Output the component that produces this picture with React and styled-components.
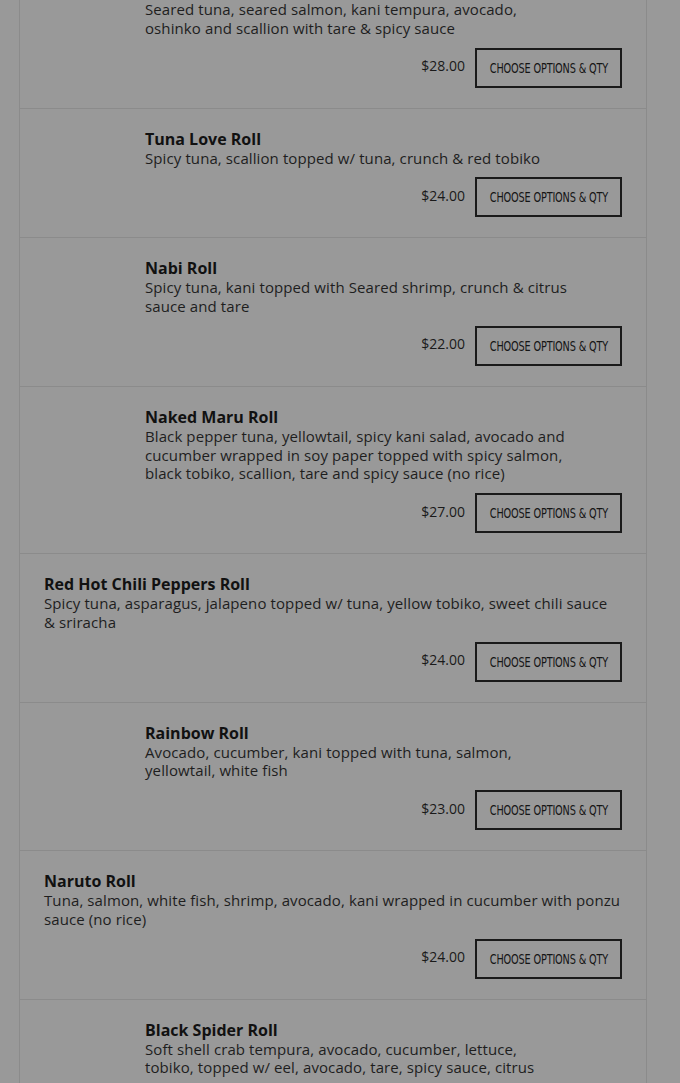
import styled, { createGlobalStyle } from "styled-components";

const GlobalStyle = createGlobalStyle`
  html, body {
    margin: 0;
    padding: 0;
    background: #999999;
  }
  body {
    font-family: "Open Sans", "Liberation Sans", sans-serif;
    color: #151515;
  }
`;

const Page = styled.div`
  width: 680px;
  height: 1083px;
  overflow: hidden;
  background: #999999;
`;

const List = styled.div`
  margin: 0 33px 0 19px;
  border-left: 1px solid #8b8b8b;
  border-right: 1px solid #8b8b8b;
`;

const Row = styled.div`
  display: flex;
  padding: ${(p) => (p.$cut ? "0" : "20px")} 24px 20px 24px;
  border-bottom: 1px solid #8b8b8b;
`;

const Thumb = styled.div`
  flex: 0 0 85px;
  margin-right: 16px;
`;

const Body = styled.div`
  flex: 1;
  min-width: 0;
`;

const Title = styled.h3`
  margin: 0;
  font-size: 16px;
  font-weight: 700;
  line-height: 20px;
  color: #111;
`;

const Desc = styled.p`
  margin: 0;
  font-size: 15px;
  line-height: 18.75px;
  letter-spacing: 0.1px;
  white-space: pre-line;
  color: #1e1e1e;
  max-width: ${(p) => (p.$narrow ? "426px" : "none")};
`;

const Footer = styled.div`
  display: flex;
  justify-content: flex-end;
  align-items: center;
  gap: 10px;
  margin-top: 10px;
`;

const Price = styled.span`
  font-size: 14px;
  color: #1a1a1a;
  margin-top: -4px;
`;

const Button = styled.button`
  width: 147px;
  height: 40px;
  box-sizing: border-box;
  border: 2px solid #1a1a1a;
  background: transparent;
  color: #151515;
  cursor: pointer;
  padding: 0;
  display: flex;
  align-items: center;
  justify-content: center;
  overflow: hidden;
`;

const Label = styled.span`
  display: inline-block;
  font-family: "DejaVu Sans Condensed", "DejaVu Sans", sans-serif;
  font-stretch: condensed;
  font-size: 13.5px;
  letter-spacing: -0.2px;
  text-transform: uppercase;
  white-space: nowrap;
  transform: scaleX(0.8);
`;

const items = [
  {
    cut: true,
    img: true,
    desc: "Seared tuna, seared salmon, kani tempura, avocado, oshinko and scallion with tare & spicy sauce",
    price: "$28.00",
  },
  {
    img: true,
    name: "Tuna Love Roll",
    desc: "Spicy tuna, scallion topped w/ tuna, crunch & red tobiko",
    price: "$24.00",
  },
  {
    img: true,
    name: "Nabi Roll",
    desc: "Spicy tuna, kani topped with Seared shrimp, crunch & citrus sauce and tare",
    price: "$22.00",
  },
  {
    img: true,
    name: "Naked Maru Roll",
    desc: "Black pepper tuna, yellowtail, spicy kani salad, avocado and cucumber wrapped in soy paper topped with spicy salmon, black tobiko, scallion, tare and spicy sauce (no rice)",
    price: "$27.00",
  },
  {
    img: false,
    name: "Red Hot Chili Peppers Roll",
    desc: "Spicy tuna, asparagus, jalapeno topped w/ tuna, yellow tobiko, sweet chili sauce & sriracha",
    price: "$24.00",
  },
  {
    img: true,
    name: "Rainbow Roll",
    desc: "Avocado, cucumber, kani topped with tuna, salmon, yellowtail, white fish",
    price: "$23.00",
  },
  {
    img: false,
    name: "Naruto Roll",
    desc: "Tuna, salmon, white fish, shrimp, avocado, kani wrapped in cucumber with ponzu sauce (no rice)",
    price: "$24.00",
  },
  {
    img: true,
    name: "Black Spider Roll",
    desc: "Soft shell crab tempura, avocado, cucumber, lettuce,\ntobiko, topped w/ eel, avocado, tare, spicy sauce, citrus sauce",
    price: "$26.00",
  },
];

const MenuItem = ({ item }) => (
  <Row $cut={item.cut}>
    {item.img && <Thumb />}
    <Body>
      {item.name && <Title>{item.name}</Title>}
      <Desc $narrow={item.img}>{item.desc}</Desc>
      <Footer>
        <Price>{item.price}</Price>
        <Button>
          <Label>Choose Options &amp; Qty</Label>
        </Button>
      </Footer>
    </Body>
  </Row>
);

export default function App() {
  return (
    <Page>
      <GlobalStyle />
      <List>
        {items.map((item, i) => (
          <MenuItem key={i} item={item} />
        ))}
      </List>
    </Page>
  );
}
